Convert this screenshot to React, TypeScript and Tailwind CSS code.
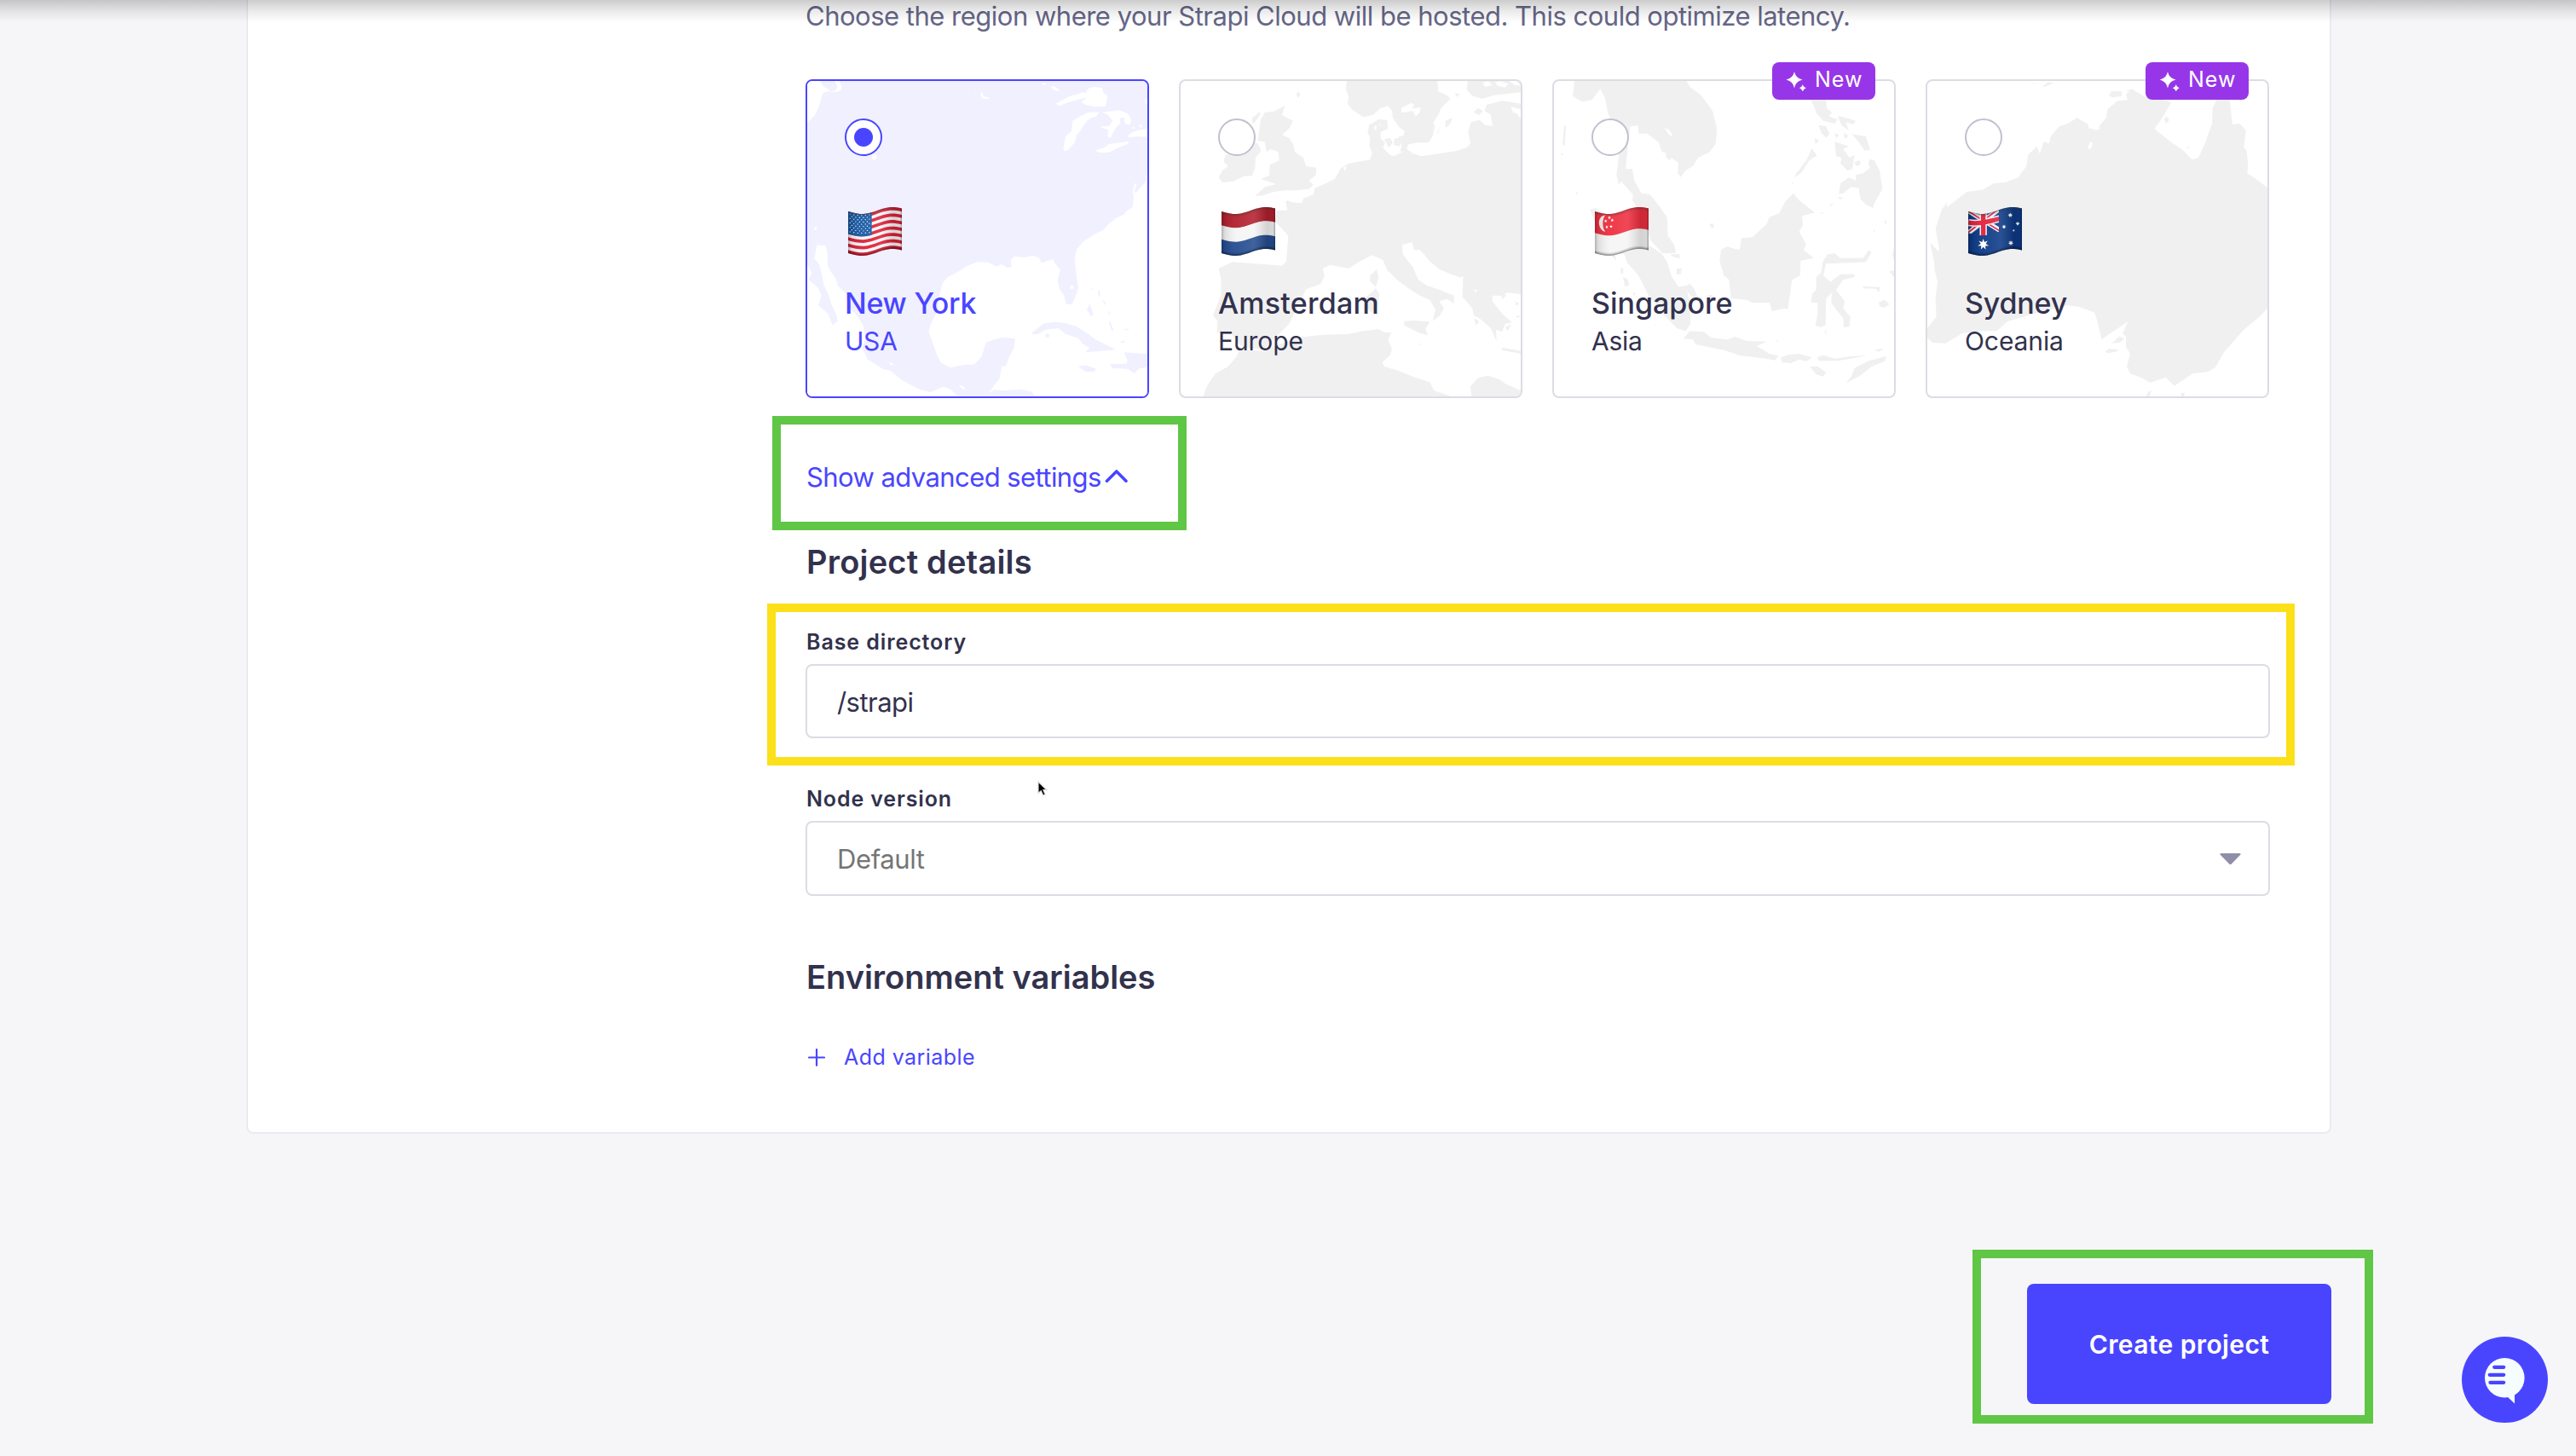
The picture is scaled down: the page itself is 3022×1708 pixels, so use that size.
import React, { useId } from "react";

/* ---------- Flags: waving 189x169 cloth ---------- */

const wave = (y: number, x0 = 0, x1 = 189) => {
  const at = (x: number) => {
    const t = x / 189;
    return y + 15 + (9 + 2 * t) * Math.sin(t * Math.PI * 1.9) - 7 * t * t;
  };
  const pts: string[] = [];
  for (let i = 0; i <= 14; i++) {
    const x = x0 + ((x1 - x0) * i) / 14;
    pts.push(`${x.toFixed(1)} ${at(x).toFixed(1)}`);
  }
  return pts;
};

const band = (y0: number, y1: number, x0 = 0, x1 = 189) =>
  `M${wave(y0, x0, x1).join("L")}L${wave(y1, x0, x1).reverse().join("L")}Z`;

const star = (cx: number, cy: number, r: number, n: number) => {
  const p: string[] = [];
  for (let i = 0; i < n * 2; i++) {
    const a = -Math.PI / 2 + (i * Math.PI) / n;
    const q = i % 2 ? r * 0.45 : r;
    p.push(`${(cx + q * Math.cos(a)).toFixed(1)},${(cy + q * Math.sin(a)).toFixed(1)}`);
  }
  return <polygon key={`${cx}-${cy}`} points={p.join(" ")} />;
};

function Flag({ children }: { children: React.ReactNode }) {
  const id = useId();
  return (
    <svg className="ml-1 h-14 w-[63px] overflow-visible" viewBox="0 0 189 168" fill="none">
      <defs>
        <linearGradient id={`${id}h`} x1="0" x2="1" y1="0" y2="0">
          <stop offset="0" stopColor="#000" stopOpacity=".28" />
          <stop offset=".06" stopColor="#000" stopOpacity=".1" />
          <stop offset=".28" stopColor="#fff" stopOpacity=".05" />
          <stop offset=".6" stopColor="#fff" stopOpacity=".12" />
          <stop offset=".85" stopColor="#000" stopOpacity=".14" />
          <stop offset=".96" stopColor="#000" stopOpacity=".12" />
          <stop offset="1" stopColor="#000" stopOpacity=".35" />
        </linearGradient>
      </defs>
      {children}
      <path d={band(0, 147)} fill={`url(#${id}h)`} />
      <path d={band(0, 5)} fill="#333" fillOpacity=".3" />
      <path d={band(5, 10)} fill="#333" fillOpacity=".1" />
      <path d={band(142, 147)} fill="#000" fillOpacity=".35" />
      <path d={band(137, 142)} fill="#000" fillOpacity=".12" />
    </svg>
  );
}

function UsaFlag() {
  const s = 147 / 13;
  return (
    <Flag>
      <path d={band(0, 147)} fill="#f7f5f6" />
      {[0, 2, 4, 6, 8, 10, 12].map((i) => (
        <path key={i} d={band(i * s, (i + 1) * s)} fill="#dd1f37" />
      ))}
      <path d={band(0, 7 * s, 0, 83)} fill="#1a5ba6" />
      <g fill="#fff">
        {Array.from({ length: 9 }, (_, r) =>
          Array.from({ length: r % 2 ? 5 : 6 }, (_, c) => {
            const x = (r % 2 ? 13 : 6.5) + c * 13.6;
            const y = 23 + r * 7.8 + 7 * Math.sin((x / 189) * 6) - 1.5 * (x / 83);
            return <circle key={`${r}-${c}`} cx={x} cy={y} r="2" />;
          }),
        )}
      </g>
    </Flag>
  );
}

function DutchFlag() {
  return (
    <Flag>
      <path d={band(0, 50)} fill="#b3202f" />
      <path d={band(49, 98)} fill="#f5f5f5" />
      <path d={band(98, 147)} fill="#264d91" />
    </Flag>
  );
}

function SingaporeFlag() {
  return (
    <Flag>
      <path d={band(0, 147)} fill="#f5f5f5" />
      <path d={band(0, 76)} fill="#ee2f3f" />
      <path d="M38 28C18 30 13 46 15 60C17 76 27 85 37 86C26 76 24 40 38 28Z" fill="#f3eeee" />
      <g fill="#fff">
        {star(51, 37, 6, 5)}
        {star(38, 49, 6, 5)}
        {star(61, 46, 6, 5)}
        {star(42, 70, 6, 5)}
        {star(57, 68, 6, 5)}
      </g>
    </Flag>
  );
}

function AustraliaFlag() {
  const id = useId();
  return (
    <Flag>
      <path d={band(0, 147)} fill="#0d3a86" />
      <clipPath id={id}>
        <path d={band(0, 76, 0, 108)} />
      </clipPath>
      <g clipPath={`url(#${id})`} fill="none">
        <path d="M-4 10L112 82M-4 94L112 4" stroke="#f4f4f8" strokeWidth="17" />
        <path d="M-4 12L112 84M-4 92L112 2" stroke="#e3223d" strokeWidth="5" />
        <path d="M53 0V104M0 54C35 62 70 50 110 41" stroke="#f4f4f8" strokeWidth="25" />
        <path d="M53 0V104M0 54C35 62 70 50 110 41" stroke="#e3223d" strokeWidth="16" />
      </g>
      <g fill="#fff">
        {star(53, 131, 20, 7)}
        {star(148, 28, 9, 7)}
        {star(126, 69, 8, 7)}
        {star(174, 58, 8, 7)}
        {star(160, 82, 5, 5)}
        {star(150, 126, 10, 7)}
      </g>
    </Flag>
  );
}

/* ---------- Region maps ---------- */

const mapClass = "absolute inset-0 h-full w-full";

function AmericaMap() {
  return (
    <svg className={mapClass} viewBox="51 45 1197 1110" preserveAspectRatio="none" fill="#f0f0ff">
      <path d="M51 45H1248V1155H51Z" />
      <g fill="#fff">
        <path d="M51 45H98L104 60L116 70L124 73L134 82L150 78L158 66L150 50L148 45H163L173 65L168 80L150 84L124 82L107 86L100 110L90 142L76 168L51 192Z" />
        <path d="M280 304L296 308L295 318L286 324L279 318Z" />
        <path d="M75 560L83 558L86 568L78 571Z" />
        <path d="M660 86L668 88L672 100L692 103L690 108L670 107L662 99ZM640 86L648 88L642 90Z" />
        <path d="M873 55L888 52L892 60ZM908 62L925 66L942 80L928 80L915 74Z" />
        <path d="M925 125L945 115L975 98L1000 92L1020 85L1030 88L1040 72L1060 65L1090 70L1092 85L1107 97L1105 120L1100 135L1060 136L1030 128L1015 120L1035 103L1000 112L970 120L940 132Z" />
        <path d="M952 285L960 240L980 222L985 185L1010 170L1040 155L1078 155L1070 168L1045 178L1028 195L1015 215L1000 235L992 262L970 288L955 292Z" />
        <path d="M1088 155L1150 148L1180 160L1192 185L1185 200L1170 195L1165 172L1150 178L1153 195L1142 205L1128 225L1118 246L1108 240L1112 218L1078 205L1112 205L1125 185L1110 165Z" />
        <path d="M1178 240L1190 228L1210 220L1248 212V242L1215 240L1185 244Z" />
        <path d="M1065 290L1095 280L1110 268L1150 262L1182 258L1178 268L1145 280L1115 296L1078 297Z" />
        <path d="M1195 208L1202 206L1204 213L1197 213ZM1220 200L1230 198L1228 208L1220 208ZM1240 110L1248 105V128L1240 122Z" />
        <path d="M1248 372L1243 380L1242 400L1225 418L1206 440L1202 432L1211 408L1204 405L1197 428L1200 455L1196 488L1172 505L1166 515L1140 526L1112 548L1095 568L1060 585L1020 612L998 640L992 675L1000 740L1005 775L990 815L982 832L962 830L955 800L940 780L932 745L942 710L925 690L916 672L875 685L868 668L845 660L815 666L780 662L768 675L770 698L755 703L735 690L718 698L690 684L650 682L615 695L585 715L545 735L528 755L518 790L512 850L488 895L478 925L490 960L508 1010L520 1035L553 1054L600 1045L640 1042L665 1015L680 965L720 952L740 948L783 952L778 985L760 1020L750 1048L735 1050L728 1092L700 1128L688 1143L708 1132L750 1134L800 1130L838 1138L855 1155H1248Z" />
        <path d="M51 690L67 720L56 745L88 772L101 800L90 835L125 865L140 905L158 890L155 872L138 835L125 795L108 760L104 730L93 690L76 670L85 622L115 625L122 650L123 695L131 712L152 742L158 765L188 795L195 840L225 870L248 905L256 950L245 985L264 1025L320 1060L345 1065L380 1095L440 1128L483 1140L530 1121L556 1130L582 1155H51Z" />
        <path d="M340 1032L358 1045L342 1045ZM585 1115L598 1118L610 1133L595 1127Z" />
        <ellipse cx="982" cy="771" rx="7" ry="7" />
      </g>
      <path d="M838 936L858 918L885 898L920 893L960 897L1000 910L1040 935L1065 955L1095 970L1136 990L1085 995L1030 1000L1045 985L1020 970L1005 950L960 935L935 915L890 920L862 936Z" />
      <circle cx="896" cy="941" r="7" />
      <path d="M1005 1050L1030 1045L1068 1058L1060 1068L1030 1068Z" />
      <path d="M1165 1000L1248 1005V1052L1220 1056L1202 1075L1180 1058L1125 1056L1118 1042L1175 1040L1178 1028Z" />
      <path d="M1035 850L1045 828L1058 868L1050 872ZM1075 778L1083 790L1080 805L1075 800ZM1040 780L1060 774L1058 778ZM1092 815L1103 830L1098 832L1090 820ZM1113 850L1118 868L1112 866ZM1115 885L1122 905L1130 925L1122 922L1114 900ZM1150 965L1170 958L1165 967ZM1162 922L1182 915L1178 922ZM1206 937L1212 939L1208 943Z" />
    </svg>
  );
}

function EuropeMap() {
  return (
    <svg className={mapClass} viewBox="48 45 1197 1110" preserveAspectRatio="none" fill="#f0f0f0">
      {/* Scandinavia */}
      <path d="M632 45L630 75L640 100L636 125L650 145L690 172L725 165L750 142L778 132L792 150L795 175L815 205L836 222L832 238L815 240L826 275L820 292L840 295L850 268L885 262L920 262L935 240L942 205L938 190L955 165L965 140L998 108L985 95L955 82L952 45Z" />
      {/* Finland and Baltic coast, down through the continent */}
      <path d="M1058 45L1055 75L1075 98L1110 108L1150 95L1245 85V45Z" />
      <path d="M1245 125L1180 115L1125 128L1118 150L1140 165L1146 203L1120 200L1100 182L1070 190L1060 225L1068 265L1055 280L1015 292L960 300L895 310L865 300L845 285L800 310L785 305L760 280L768 262L752 248L752 225L778 212L775 182L745 180L712 200L706 225L715 245L712 270L722 298L715 322L640 335L612 352L590 390L560 405L520 422L515 445L480 458L475 475L440 472L425 465L418 470L424 500L385 500L380 540L400 560L427 590L420 680L405 695L340 690L230 682L182 705L190 740L190 800L162 870L178 890L176 930L225 932L250 965L270 985L340 990L395 935L430 900L440 880L490 778L540 760L555 730L548 705L575 692L640 705L670 685L722 658L760 675L775 710L810 745L850 775L890 800L925 815L945 850L935 890L960 870L975 845L958 820L985 812L1010 828L1010 800L960 780L915 765L885 745L865 700L830 655L828 622L862 612L870 640L890 640L905 655L925 680L960 708L1000 725L1042 740L1040 805L1075 845L1080 870L1100 880L1140 915L1160 962L1158 920L1180 928L1190 900L1215 895L1180 865L1145 820L1145 800L1175 800L1200 790L1245 795Z" />
      {/* Great Britain and Ireland */}
      <path d="M310 450L345 418L385 408L330 390L360 378L362 340L395 325L392 295L365 285L350 295L345 260L320 255L325 215L330 180L345 155L375 152L415 132L405 165L443 185L432 210L405 235L430 245L445 270L450 295L480 315L490 345L525 350L525 375L500 395L515 410L500 425L455 430L420 430L375 435L340 448Z" />
      <path d="M182 385L195 360L215 345L200 330L205 305L245 300L290 255L320 265L332 290L312 315L310 350L300 378L270 380L235 398L195 402ZM300 175L325 155L330 160L310 190L300 195Z" />
      <path d="M455 92L461 82L470 92L462 104Z" />
      {/* Mediterranean islands */}
      <path d="M738 708L745 735L735 770L715 750L715 730ZM735 775L748 795L740 840L720 860L705 845L702 805ZM835 890L870 888L925 892L910 918L918 940L890 932L835 905ZM1178 983L1245 995V1005L1180 992ZM888 970L898 970L892 975Z" />
      {/* North Africa */}
      <path d="M128 1155L140 1120L170 1075L215 1050L245 1015L255 990L340 995L400 970L460 948L550 938L640 935L690 925L745 918L765 930L790 930L778 955L792 990L785 1010L758 1035L765 1050L815 1065L865 1085L925 1105L940 1135L1000 1155ZM1072 1155L1068 1120L1095 1090L1130 1082L1170 1095L1190 1110L1245 1135V1155Z" />
      <g fill="#fff">
        <path d="M825 140L860 122L870 130L862 142L892 138L890 155L875 170L865 150L840 155L825 155Z" />
        <path d="M1110 52L1130 45L1145 60L1120 65ZM1155 50L1170 45L1200 55L1190 68L1165 62ZM1205 45H1230L1245 60H1225Z" />
        <path d="M1210 135L1245 145V178L1232 160L1218 155Z" />
        <path d="M730 205L738 200L736 218L730 215ZM745 198L752 195L750 205ZM888 268L902 270L895 277ZM1095 165L1112 160L1108 175Z" />
        <path d="M1030 738L1042 732L1042 742ZM1078 780L1092 780L1088 790Z" />
        <path d="M620 350L632 345L628 362Z" />
      </g>
      <path d="M980 185L1003 175L998 195L980 210ZM948 232L962 203L955 225ZM1012 88L1030 90L1022 102ZM1078 155L1095 140L1112 150L1100 165ZM765 250L785 245L795 262L780 280ZM800 248L822 245L820 275L798 270Z" />
      <path d="M1175 790L1195 800L1180 812ZM1225 820L1240 830L1228 835ZM1225 875L1243 868L1238 878ZM1190 912L1212 900L1200 925ZM1080 880L1100 890L1088 905Z" />
    </svg>
  );
}

function AsiaMap() {
  return (
    <svg className={mapClass} viewBox="42 105 1197 1110" preserveAspectRatio="none" fill="#f0f0f0">
      {/* Indochina and the Malay peninsula */}
      <path d="M115 105L108 158L140 178L175 172L205 133L222 165L232 220L245 245L270 370L262 435L270 470L278 458L320 505L318 525L340 560L372 640L385 670L425 712L472 710L465 680L443 650L440 585L415 548L380 505L350 500L325 455L318 415L295 415L298 375L310 265L338 262L340 290L370 290L410 320L422 355L435 358L438 375L450 385L455 375L480 392L478 430L488 443L505 420L530 405L550 375L590 355L612 325L615 270L600 210L560 155L520 125L508 105Z" />
      {/* Sumatra and Java */}
      <path d="M168 558L190 552L240 600L300 650L360 672L420 712L440 740L455 790L480 830L505 825L520 880L523 960L505 985L475 975L430 930L375 860L340 790L300 745L290 715L240 690L190 610ZM500 830L520 818L535 835L545 860L565 868L560 880L530 870ZM580 860L600 858L605 875L588 875Z" />
      <path d="M498 1012L520 985L570 988L595 1008L650 1015L680 1005L720 1020L790 1022L755 1038L780 1052L800 1065L832 1072L820 1088L790 1082L700 1072L640 1052L540 1032L532 1015Z" />
      <path d="M840 1078L870 1068L905 1065L950 1078L930 1092L905 1085L875 1098L845 1095ZM968 1078L990 1070L1030 1082L1080 1075L1145 1070L1100 1080L1040 1090L975 1090ZM942 1110L970 1110L1000 1130L990 1145L965 1138ZM1088 1145L1100 1115L1150 1090L1213 1073L1205 1092L1160 1110L1115 1145L1070 1168ZM1170 1050L1203 1046L1185 1058Z" />
      {/* Borneo */}
      <path d="M885 500L905 525L960 568L915 580L918 612L905 635L930 680L920 700L957 728L910 738L908 790L880 805L865 910L855 905L810 915L800 885L740 885L720 875L665 870L658 805L640 790L625 740L630 700L650 688L695 700L702 658L740 655L790 610L800 585L835 570L855 530Z" />
      {/* Sulawesi */}
      <path d="M1005 715L1030 712L1050 728L1130 728L1150 700L1160 708L1140 742L1085 745L1000 748L990 790L1015 812L1050 785L1100 785L1100 795L1060 805L1035 840L1065 880L1060 905L1085 935L1082 970L1062 972L1060 940L1035 910L1018 885L1020 850L1000 870L998 965L980 972L962 965L970 925L970 885L948 885L950 855L965 840L965 795L982 780L988 740ZM1130 828L1190 830L1185 850L1175 836L1130 835ZM1185 885L1205 875L1223 890L1205 903L1188 898ZM995 985L1000 980L1000 1002Z" />
      {/* Philippines */}
      <path d="M945 170H1000L1002 200L1020 215L1010 230L1040 240L1030 255L990 245L965 218L960 200ZM1040 228L1070 235L1105 245L1095 258L1070 250L1078 278L1055 262ZM972 260L1000 265L1012 290L1000 305L985 290ZM1090 292L1140 300L1155 348L1135 350L1115 320ZM1030 318L1080 335L1060 345L1082 375L1100 365L1092 415L1075 420L1050 395L1055 375L1035 370ZM960 305L975 315L962 328ZM950 342L968 368L940 385L915 425L888 447L895 430L930 385ZM1100 390L1118 384L1122 398L1105 405ZM1155 380L1170 385L1188 420L1198 485L1170 535L1165 552L1140 540L1120 520L1115 482L1088 478L1060 500L1045 503L1050 465L1080 445L1105 455L1105 435L1130 430L1155 410L1148 395ZM1062 285L1078 300L1065 310ZM1030 288L1045 295L1035 308Z" />
      {/* Small islands */}
      <path d="M72 330L78 262L84 262L80 332ZM66 358L75 362L70 370ZM115 492L126 500L124 508ZM240 715L255 712L262 738ZM278 760L286 765L285 785L277 780ZM285 795L300 800L308 825L292 828ZM320 845L330 855L322 862ZM590 610L600 605L606 617L597 625ZM878 460L885 463L882 470ZM1040 512L1060 515L1048 522ZM1010 540L1025 538L1020 545ZM978 568L992 568L985 573ZM1205 595L1213 600L1208 614ZM1165 626L1173 632L1168 636ZM1239 690V740L1233 715ZM1222 775L1239 772V795ZM450 715L485 715L485 730L465 725ZM475 765L492 765L488 785L472 785ZM820 1018L832 1018L828 1022ZM396 960L405 965L400 967Z" />
      <path d="M430 270L445 275L460 295L452 300Z" fill="#fff" />
    </svg>
  );
}

function OceaniaMap() {
  return (
    <svg className={mapClass} viewBox="66 105 1197 1110" preserveAspectRatio="none" fill="#f0f0f0">
      <path d="M1263 480L1215 445L1192 430L1195 400L1190 350L1180 340L1187 278L1165 255L1140 258L1130 170H1085L1070 200L1068 255L1045 320L1020 375L998 382L965 348L930 325L865 273L890 240L925 180L890 170L830 160L790 135L765 150L770 172L735 175L700 205L695 235L670 265L672 275L635 272L630 255L592 235L560 255L530 265L500 300L495 325L475 318L462 362L452 335L420 365L415 405L385 445L340 462L300 465L260 488L205 495L135 550V533L118 555L95 625L108 695L105 705L75 672L90 740L92 770L102 810L95 870L98 935L66 975V1010L85 1026L130 1028L190 992L265 985L310 985L350 950L440 925L510 905L560 895L600 900L655 920L665 955L680 1015L700 1000L772 952L750 990L765 1005V1040L780 1065L768 1110L780 1135L820 1150L850 1167L905 1148L935 1178L1000 1135L1055 1128L1080 1112L1110 1060L1180 980L1240 930L1263 905Z" />
      <path d="M705 155L715 140L750 142L750 158L715 163ZM765 140L790 133L795 145ZM898 240L908 230L918 240L908 256ZM690 1058L705 1048L740 1050L730 1058L700 1063ZM715 1028L740 1005L760 1010L745 1025ZM835 1215L845 1198L855 1195L848 1215ZM960 1215L958 1203L972 1202L970 1215ZM470 125L490 110H512L485 124ZM437 112L446 112L441 117ZM975 345L990 330L985 342Z" />
      <path d="M632 338L640 318L648 325L642 342L633 345ZM545 250L552 248L550 262ZM645 272L676 270L660 278ZM735 1000L770 955L755 990Z" fill="#fff" />
    </svg>
  );
}

/* ---------- Region card ---------- */

type Region = {
  city: React.ReactNode;
  area: React.ReactNode;
  flag: React.ReactNode;
  map: React.ReactNode;
  selected?: boolean;
  fresh?: boolean;
};

const regions: Region[] = [
  {
    city: <span className="tracking-[-0.25px]">New York</span>,
    area: <span className="tracking-[-0.2px]">USA</span>,
    flag: <UsaFlag />,
    map: <AmericaMap />,
    selected: true,
  },
  {
    city: <span className="tracking-[0.22px]">Amsterdam</span>,
    area: <span className="tracking-[-0.1px]">Europe</span>,
    flag: <DutchFlag />,
    map: <EuropeMap />,
  },
  {
    city: <span className="tracking-[0px]">Singapore</span>,
    area: <span className="tracking-[-0.3px]">Asia</span>,
    flag: <SingaporeFlag />,
    map: <AsiaMap />,
    fresh: true,
  },
  {
    city: <span className="tracking-[-0.2px]">Sydney</span>,
    area: <span className="tracking-[-0.1px]">Oceania</span>,
    flag: <AustraliaFlag />,
    map: <OceaniaMap />,
    fresh: true,
  },
];

function NewBadge() {
  return (
    <div className="absolute -top-[22px] right-[22px] flex h-11 w-[121px] items-center rounded-lg bg-[#9736e8] pl-4 text-white">
      <svg className="h-6 w-6" viewBox="0 0 24 24" fill="currentColor">
        <path d="M10 1C11.5 6.500 13.500 8.500 19.500 10.500C13.500 12.500 11.500 14.500 10 20.500C8.500 14.500 6.500 12.500 .5 10.500C6.500 8.500 8.500 6.500 10 1Z" />
        <path d="M19.800 16C20.500 18.300 21.700 19.500 24 20.300C21.700 21.100 20.500 22.300 19.800 24.600C19.100 22.300 17.900 21.100 15.600 20.300C17.900 19.500 19.100 18.300 19.800 16Z" />
      </svg>
      <span className="-mt-[5px] ml-[10px] text-[25px] leading-9 tracking-[1px]">New</span>
    </div>
  );
}

function RegionCard({ city, area, flag, map, selected, fresh }: Region) {
  return (
    <div
      className={
        selected
          ? "relative flex h-[374px] w-[403px] flex-col rounded-lg border-2 border-[#4945ff] bg-white px-11 pt-11 text-[#4945ff]"
          : "relative flex h-[374px] w-[403px] flex-col rounded-lg border-2 border-[#dcdce4] bg-white px-11 pt-11 text-[#32324d]"
      }
    >
      <div className="absolute inset-0 overflow-hidden rounded-md">{map}</div>
      <div
        className={
          selected
            ? "relative flex size-11 shrink-0 items-center justify-center rounded-full border-2 border-[#4945ff] bg-white"
            : "relative flex size-11 shrink-0 items-center justify-center rounded-full border-2 border-[#c0c0cf] bg-white"
        }
      >
        {selected && <span className="size-[22px] rounded-full bg-[#4945ff]" />}
      </div>
      <div className="relative mt-[60px] h-14">{flag}</div>
      <div className="relative mt-[35px] text-[34px] leading-[44px] font-medium whitespace-nowrap">{city}</div>
      <div className="relative mt-1 text-[30px] leading-9 whitespace-nowrap">{area}</div>
      {fresh && <NewBadge />}
    </div>
  );
}

/* ---------- Page ---------- */

export default function App() {
  return (
    <div className="relative flex h-[1708px] w-full flex-col overflow-hidden bg-[#f6f6f9] font-['Inter',sans-serif] text-[#32324d]">
      <section className="ml-[289px] flex h-[1330px] w-[2446px] shrink-0 rounded-b-lg border-2 border-t-0 border-[#eaeaef] bg-white">
        <div className="w-[654px] shrink-0" />
        <div className="-mt-[5px] flex w-[1718px] flex-col">
          <p className="text-[31px] leading-[48px] tracking-[-0.5px] whitespace-nowrap text-[#666687]">
            Choose the region where your Strapi Cloud will be hosted. This could optimize latency.
          </p>

          <div className="mt-[50px] flex gap-[35px]">
            {regions.map((r, i) => (
              <RegionCard key={i} {...r} />
            ))}
          </div>

          <button className="mt-[69px] flex h-12 items-center self-start pl-px text-[31px] leading-[48px] tracking-[-0.58px] text-[#4945ff]">
            Show advanced settings
            <svg className="-mt-[2px] ml-[4px] h-4 w-7" viewBox="0 0 28 16" fill="none" stroke="currentColor" strokeWidth="3.600" strokeLinecap="round" strokeLinejoin="round">
              <path d="M2.500 13.200L13.800 2L25 13.200" />
            </svg>
          </button>

          <h2 className="mt-[51px] pl-px text-[38px] leading-[48px] font-semibold tracking-[0.2px]">Project details</h2>

          <label className="mt-[52px] pl-px text-[25px] leading-9 font-semibold tracking-[0.91px]">Base directory</label>
          <div className="mt-2 flex h-[87px] items-center rounded-lg border-2 border-[#dcdce4] bg-white px-[35px] pt-[3px] text-[31px] tracking-[-0.55px]">
            /strapi
          </div>

          <label className="mt-[53px] pl-px text-[25px] leading-9 font-semibold tracking-[0.86px]">Node version</label>
          <div className="mt-2 flex h-[88px] items-center justify-between rounded-lg border-2 border-[#dcdce4] bg-white pr-8 pl-[35px] text-[31px] tracking-[-0.4px] text-[#757575]">
            <span className="pt-[2px]">Default</span>
            <svg className="mt-px h-[14px] w-[25px]" viewBox="0 0 25 14" fill="#8e8ea9">
              <path d="M1.500 0H23.500Q25.500 .5 24 2.100L13.500 12.700Q12.500 13.500 11.500 12.700L1 2.100Q-.5 .5 1.500 0Z" />
            </svg>
          </div>

          <h2 className="mt-[71px] pl-px text-[38px] leading-[48px] font-semibold">Environment variables</h2>

          <button className="mt-[52px] flex h-9 items-center self-start pl-[3px] text-[25px] leading-9 tracking-[0.45px] text-[#4945ff]">
            <svg className="h-[21px] w-5" viewBox="0 0 20 21" fill="none" stroke="currentColor" strokeWidth="2.200" strokeLinecap="round">
              <path d="M1 10.500H19M10 1.200V19.800" />
            </svg>
            <span className="ml-[22px]">Add variable</span>
          </button>
        </div>
      </section>

      <div className="mt-[176px] flex w-[2735px] shrink-0 justify-end">
        <button className="h-[141px] w-[357px] rounded-lg bg-[#4945ff] pt-[2px] text-[30px] font-semibold tracking-[0.4px] text-white">
          Create project
        </button>
      </div>

      {/* Shadow cast by the sticky header */}
      <div className="absolute inset-x-0 top-0 h-[26px] bg-linear-to-b from-black/20 via-black/8 to-transparent" />

      {/* Highlight frames */}
      <div className="absolute top-[488px] left-[906px] h-[134px] w-[486px] border-[10px] border-[#60c645]" />
      <div className="absolute top-[708px] left-[900px] h-[190px] w-[1792px] border-[10px] border-[#fbe01a]" />
      <div className="absolute top-[1466px] left-[2314px] h-[204px] w-[470px] border-[10px] border-[#60c645]" />

      {/* Pointer */}
      <svg className="absolute top-[915px] left-[1216px] h-[22px] w-[18px]" viewBox="0 0 18 22">
        <path d="M2 2V15.500L5.300 12.700L7.700 18L10.200 17L7.900 11.700H12Z" fill="#000" stroke="#ddd" strokeWidth="1.200" />
      </svg>

      {/* Chat launcher */}
      <div className="absolute top-[1568px] left-[2888px] flex size-[101px] items-center justify-center rounded-full bg-[#4945ff]">
        <svg className="size-[101px]" viewBox="0 0 101 101" fill="none">
          <circle cx="50.300" cy="48.300" r="23.300" fill="#f5fdff" />
          <path d="M53 70L62 78.500V66L68 60Z" fill="#f5fdff" />
          <path d="M38.200 35.800H49.200M32.700 44.800H49.200M33.400 53.800H49.200" stroke="#4945ff" strokeWidth="4.200" strokeLinecap="round" />
        </svg>
      </div>
    </div>
  );
}
